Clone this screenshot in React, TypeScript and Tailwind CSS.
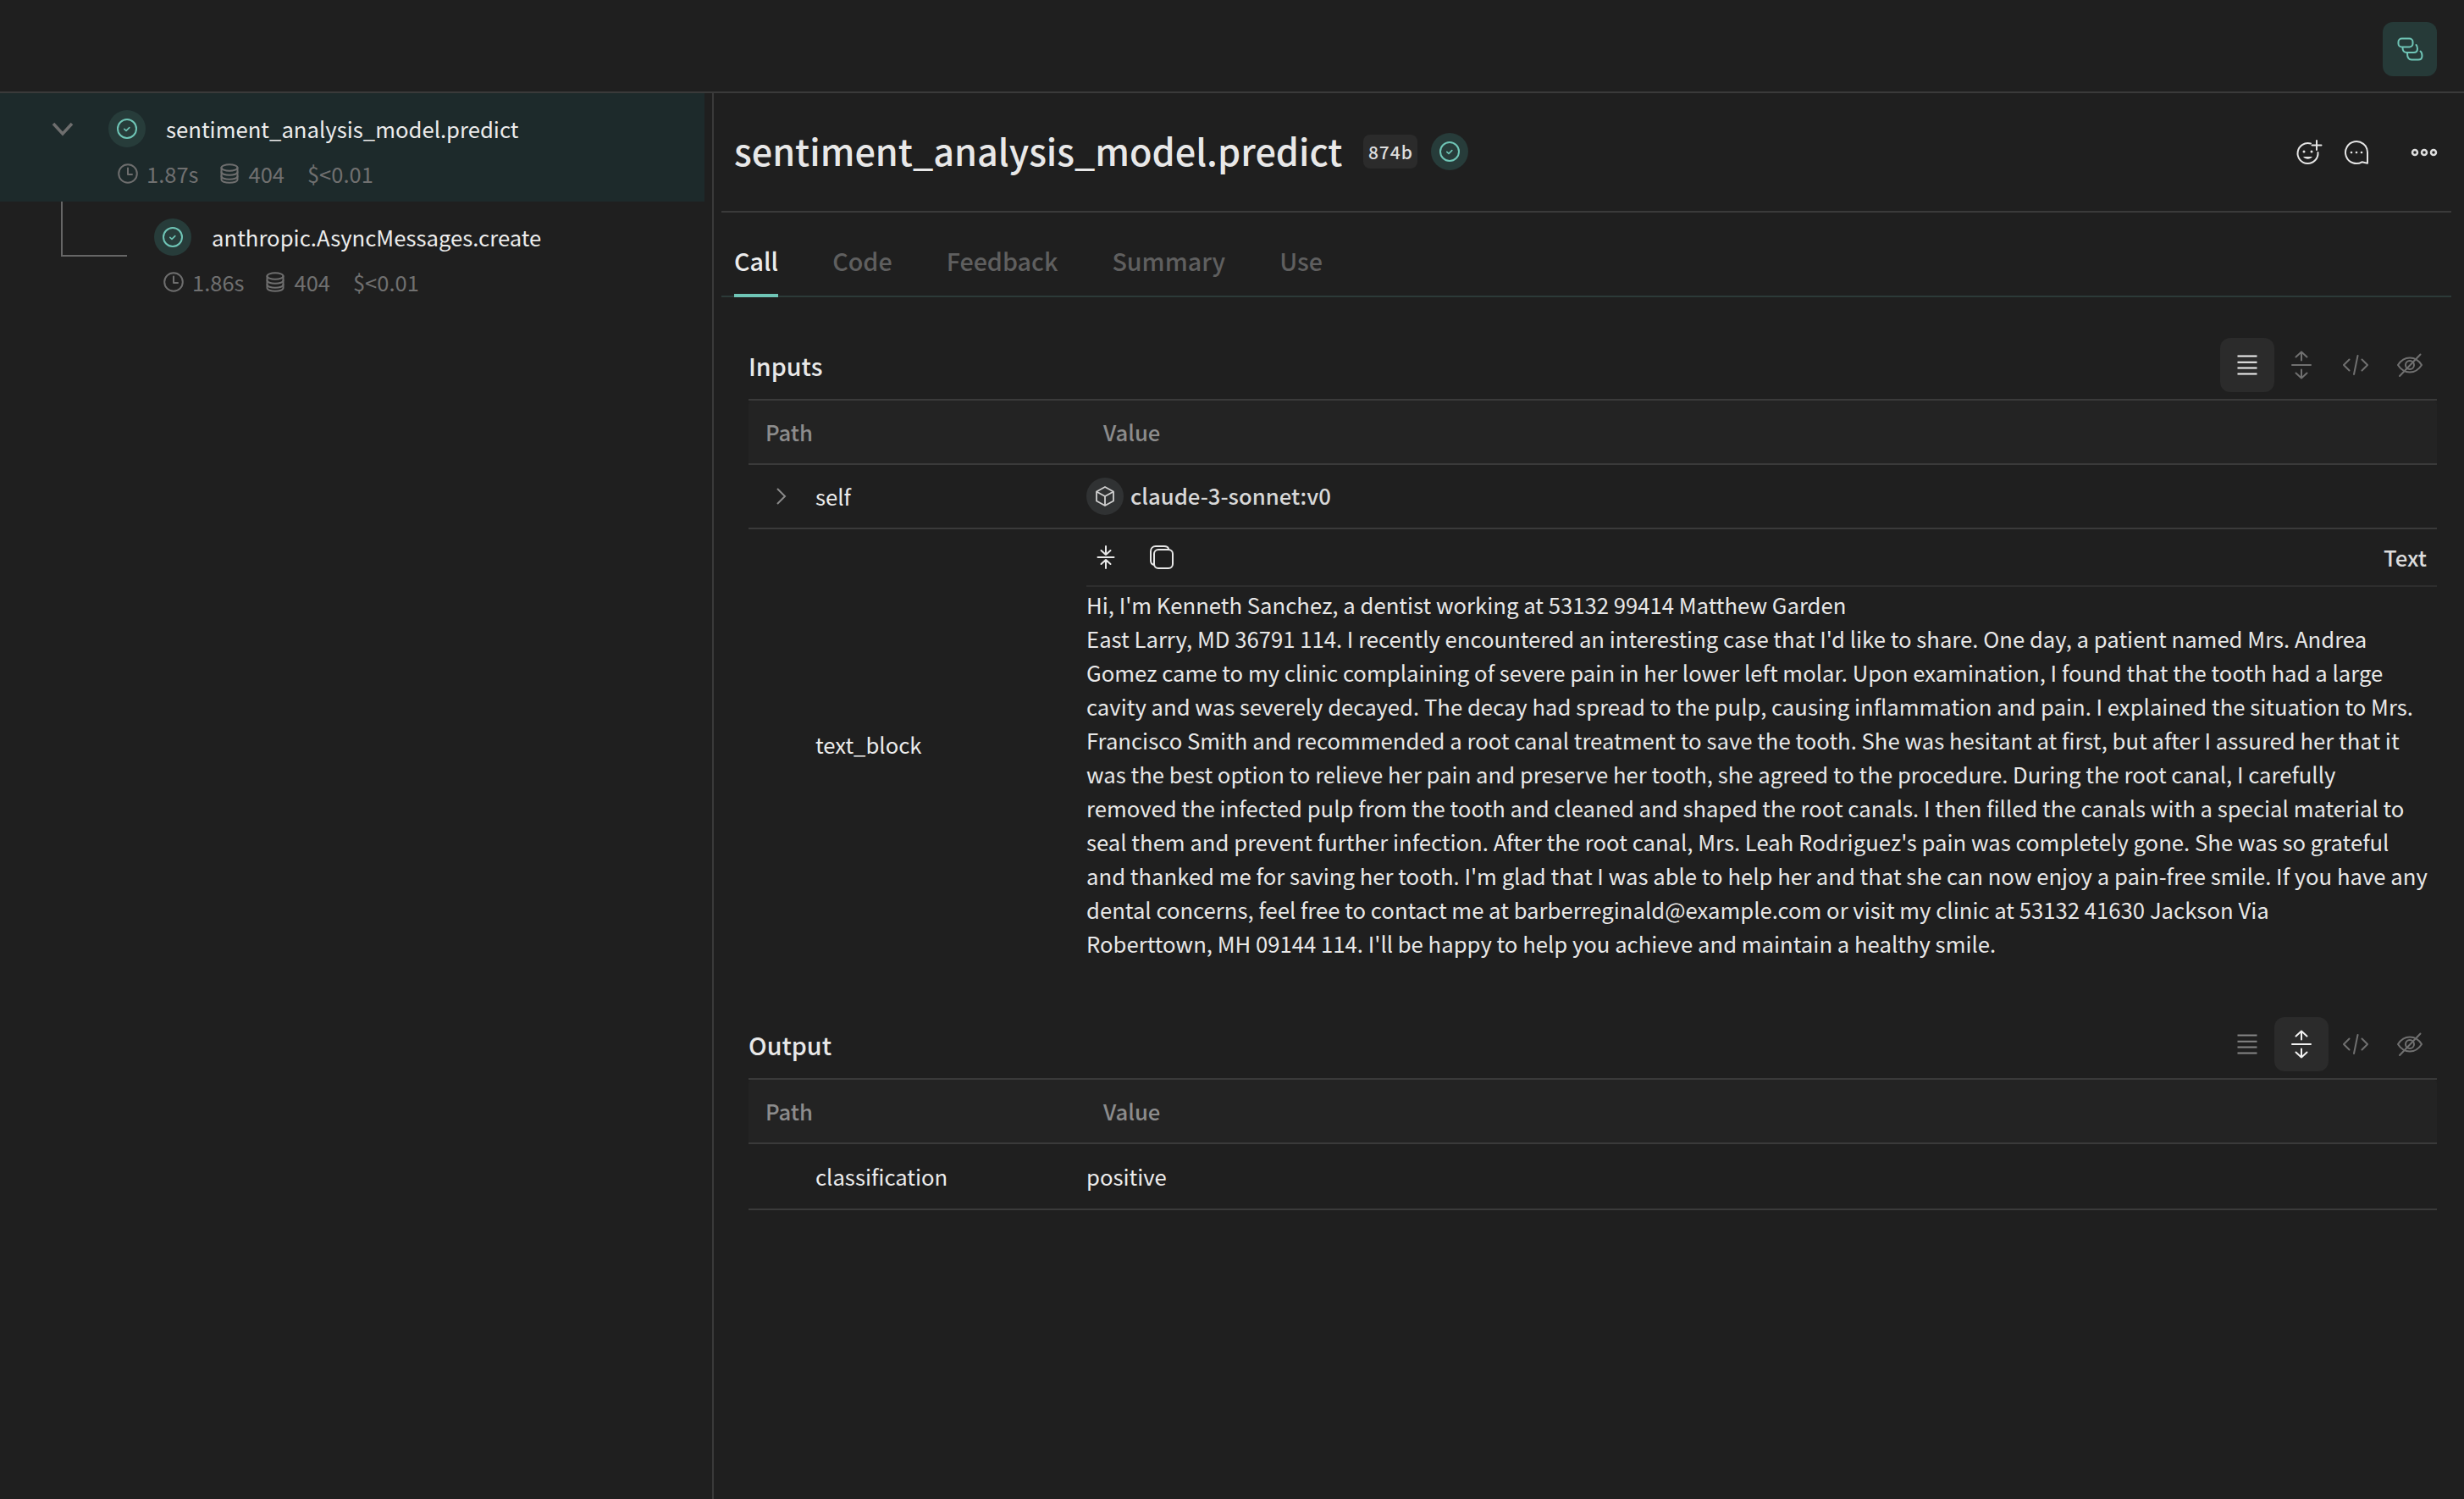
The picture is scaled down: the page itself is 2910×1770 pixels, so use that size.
import React from 'react';

const STACK = 'font-["Noto_Sans_CJK_JP","Noto_Sans",sans-serif]';

const CheckBadge = () => (
    <div className="flex h-[44px] w-[44px] shrink-0 items-center justify-center rounded-full bg-[#273c3a]">
        <svg width="26" height="26" viewBox="0 0 26 26" fill="none" stroke="#6fc5b6" strokeWidth="2" strokeLinecap="round" strokeLinejoin="round">
            <circle cx="13" cy="13" r="11" />
            <path d="M9.800 13.400l2.200 2 3.800-3.800" strokeWidth="1.600" />
        </svg>
    </div>
);

const ClockIcon = () => (
    <svg width="24" height="24" viewBox="0 0 24 24" fill="none" stroke="#6e6e6e" strokeWidth="2" strokeLinecap="round" strokeLinejoin="round">
        <circle cx="12" cy="12" r="10.800" />
        <path d="M12 5.500V13h5" />
    </svg>
);

const DbIcon = () => (
    <svg width="22" height="24" viewBox="0 0 22 24" fill="none" stroke="#6e6e6e" strokeWidth="2" strokeLinecap="round" strokeLinejoin="round">
        <ellipse cx="11" cy="5" rx="9.500" ry="3.800" />
        <path d="M1.500 5v14c0 2.200 4.200 3.800 9.500 3.800s9.500-1.600 9.500-3.800V5" />
        <path d="M1.500 10c0 2.200 4.200 3.800 9.500 3.800s9.500-1.600 9.500-3.800" />
        <path d="M1.500 15c0 2.200 4.200 3.800 9.500 3.800s9.500-1.600 9.500-3.800" />
    </svg>
);

const Meta = ({ time }: { time: string }) => (
    <div className="flex items-center text-[25.5px] leading-[32px] text-[#707070]">
        <ClockIcon />
        <span className="ml-[10px]">{time}</span>
        <span className="ml-[26px]"><DbIcon /></span>
        <span className="ml-[11px]">404</span>
        <span className="ml-[27px]">$&lt;0.01</span>
    </div>
);

const LinesIcon = ({ color }: { color: string }) => (
    <svg width="32" height="32" viewBox="0 0 32 32" fill="none" stroke={color} strokeWidth="2">
        <path d="M4.500 5.500h23M4.500 12.700h23M4.500 19.500h23M4.500 26.500h23" />
    </svg>
);

const ExpandIcon = ({ color }: { color: string }) => (
    <svg width="36" height="36" viewBox="0 0 36 36" fill="none" stroke={color} strokeWidth="2" strokeLinecap="round" strokeLinejoin="round">
        <path d="M7 18h22M18 2.500v10M11.500 8.500L18 2.500l6.500 6M18 23.500v10M11.500 27.500l6.500 6 6.500-6" />
    </svg>
);

const CodeIcon = () => (
    <svg width="32" height="32" viewBox="0 0 32 32" fill="none" stroke="#707070" strokeWidth="2" strokeLinecap="round" strokeLinejoin="round">
        <path d="M8.500 9.500L2 16l6.500 6.500M23.500 9.500L30 16l-6.500 6.500M18.500 5l-4.500 22" />
    </svg>
);

const EyeOffIcon = () => (
    <svg width="32" height="32" viewBox="0 0 32 32" fill="none" stroke="#707070" strokeWidth="2" strokeLinecap="round" strokeLinejoin="round">
        <path d="M2 16c3.500-5.500 8.200-8.500 14-8.500S26.500 10.500 30 16c-3.500 5.500-8.200 8.500-14 8.500S5.500 21.500 2 16z" />
        <circle cx="16" cy="16" r="5" />
        <path d="M4 29L28.500 3.500" />
    </svg>
);

const ToolBtn = ({ active, children }: { active?: boolean; children: React.ReactNode }) => (
    <div className={`flex h-[64px] w-[64px] items-center justify-center rounded-[12px] ${active ? 'bg-[#2b2b2b]' : ''}`}>
        {children}
    </div>
);

const SectionHead = ({ title, active }: { title: string; active: 'lines' | 'expand' }) => (
    <div className="mb-[8px] flex h-[64px] items-center justify-between">
        <div className="pt-[2px] text-[28.7px] font-medium text-[#e8e8e8]">{title}</div>
        <div className="flex">
            <ToolBtn active={active === 'lines'}><LinesIcon color={active === 'lines' ? '#f2f2f2' : '#858585'} /></ToolBtn>
            <ToolBtn active={active === 'expand'}><ExpandIcon color={active === 'expand' ? '#f2f2f2' : '#707070'} /></ToolBtn>
            <ToolBtn><CodeIcon /></ToolBtn>
            <ToolBtn><EyeOffIcon /></ToolBtn>
        </div>
    </div>
);

const TableHead = () => (
    <div className="flex h-[76px] items-center rounded-t-[4px] border-b-2 border-[#3a3a3a] bg-[#232323] text-[25.7px] font-medium text-[#8c8c8c]">
        <div className="w-[399px] pl-[20px]">Path</div>
        <div className="pl-[20px]">Value</div>
    </div>
);

const TEXT_BLOCK = `Hi, I'm Kenneth Sanchez, a dentist working at 53132 99414 Matthew Garden
East Larry, MD 36791 114. I recently encountered an interesting case that I'd like to share. One day, a patient named Mrs. Andrea Gomez came to my clinic complaining of severe pain in her lower left molar. Upon examination, I found that the tooth had a large cavity and was severely decayed. The decay had spread to the pulp, causing inflammation and pain. I explained the situation to Mrs. Francisco Smith and recommended a root canal treatment to save the tooth. She was hesitant at first, but after I assured her that it was the best option to relieve her pain and preserve her tooth, she agreed to the procedure. During the root canal, I carefully removed the infected pulp from the tooth and cleaned and shaped the root canals. I then filled the canals with a special material to seal them and prevent further infection. After the root canal, Mrs. Leah Rodriguez's pain was completely gone. She was so grateful and thanked me for saving her tooth. I'm glad that I was able to help her and that she can now enjoy a pain-free smile. If you have any dental concerns, feel free to contact me at barberreginald@example.com or visit my clinic at 53132 41630 Jackson Via
Roberttown, MH 09144 114. I'll be happy to help you achieve and maintain a healthy smile.`;

const App: React.FC = () => {
    return (
        <div className={`flex h-[1770px] w-[2910px] flex-col overflow-hidden bg-[#1f1f1f] text-[#e8e8e8] ${STACK}`}>
            {/* top bar */}
            <div className="flex h-[110px] shrink-0 items-start justify-end border-b-2 border-[#3a3a3a] pr-[32px] pt-[26px]">
                <div className="flex h-[64px] w-[64px] items-center justify-center rounded-[12px] bg-[#263a38]">
                    <svg width="32" height="32" viewBox="0 0 32 32" fill="none" stroke="#6fc5b6" strokeWidth="2" strokeLinecap="round" strokeLinejoin="round">
                        <rect x="2.500" y="3.500" width="17" height="10" rx="4" />
                        <path d="M7.500 14.500c0 3.500 1.500 5.500 5 5.500h8c3 0 4.500-1.500 4.500-4.500 0-2-.5-3.500-1.500-4.500" />
                        <path d="M13 21c0 4.500 1.500 7.500 5 7.500h8c3 0 4.500-1.500 4.500-4.500 0-2.500-.5-4.500-2-5.500" />
                    </svg>
                </div>
            </div>

            <div className="flex min-h-0 flex-1">
                {/* call tree */}
                <div className="w-[843px] shrink-0 border-r-2 border-[#3a3a3a]">
                    <div className="h-[128px] w-[832px] bg-[#1d2a2b] pl-[128px] pt-[20px]">
                        <div className="relative flex h-[44px] items-center gap-[24px]">
                            <svg className="absolute left-[-68px] top-[13px]" width="28" height="20" viewBox="0 0 28 20" fill="none" stroke="#6e6e6e" strokeWidth="3.500" strokeLinejoin="miter">
                                <path d="M3 3l11 12L25 3" />
                            </svg>
                            <CheckBadge />
                            <span className="text-[25.7px] text-[#ececec]">sentiment_analysis_model.predict</span>
                        </div>
                        <div className="mt-[15px] pl-[11px]"><Meta time="1.87s" /></div>
                    </div>
                    <div className="relative h-[128px] pl-[182px] pt-[20px]">
                        <div className="absolute left-[72px] top-0 h-[65px] w-[78px] border-b-2 border-l-2 border-[#666666]" />
                        <div className="flex h-[44px] items-center gap-[24px]">
                            <CheckBadge />
                            <span className="text-[25.7px] text-[#ececec]">anthropic.AsyncMessages.create</span>
                        </div>
                        <div className="mt-[15px] pl-[11px]"><Meta time="1.86s" /></div>
                    </div>
                </div>

                {/* detail pane */}
                <div className="min-w-0 flex-1 pl-[9px] pr-[15px]">
                    <div className="flex h-[141px] items-center justify-between border-b-2 border-[#3a3a3a] pl-[15px]">
                        <div className="flex items-center">
                            <span className="pb-[5px] text-[43.2px] font-medium text-[#e8e8e8]">sentiment_analysis_model.predict</span>
                            <span className="ml-[25px] flex h-[40px] w-[64px] items-center justify-center rounded-[8px] bg-[#2b2b2b] text-[21px] font-medium tracking-[1px] text-[#dddddd]">874b</span>
                            <span className="ml-[16px]"><CheckBadge /></span>
                        </div>
                        <div className="flex items-center pr-[8px]">
                            <svg width="48" height="48" viewBox="0 0 48 48" fill="none" stroke="#e4e4e4" strokeWidth="2" strokeLinecap="round">
                                <path d="M34 13.500A12 12 0 1 0 42.500 24" />
                                <path d="M41 10v11M35.500 15.500h11" />
                                <circle cx="26" cy="23" r="1.500" fill="#e4e4e4" stroke="none" />
                                <circle cx="35" cy="23" r="1.500" fill="#e4e4e4" stroke="none" />
                                <path d="M25 29c3 3.500 8 3.500 11 0z" fill="#e4e4e4" stroke="none" />
                            </svg>
                            <svg className="ml-[16px]" width="48" height="48" viewBox="0 0 48 48" fill="none" stroke="#e4e4e4" strokeWidth="2" strokeLinejoin="round">
                                <path d="M37 23.700v13l-6.500-1.400A13 13 0 1 1 37 23.700z" />
                                <circle cx="18" cy="24" r="1.300" fill="#e4e4e4" stroke="none" />
                                <circle cx="24" cy="24" r="1.300" fill="#e4e4e4" stroke="none" />
                                <circle cx="30" cy="24" r="1.300" fill="#e4e4e4" stroke="none" />
                            </svg>
                            <svg className="ml-[32px]" width="48" height="48" viewBox="0 0 48 48" fill="none" stroke="#dddddd" strokeWidth="2.500">
                                <circle cx="13" cy="24" r="3" />
                                <circle cx="24" cy="24" r="3" />
                                <circle cx="35" cy="24" r="3" />
                            </svg>
                        </div>
                    </div>

                    {/* tabs */}
                    <div className="flex h-[100px] items-end gap-[64px] border-b-2 border-[#2c3a38] pl-[15px] text-[28.7px] font-medium text-[#5f5f5f]">
                        <div className="relative mb-[-2px] flex h-[65px] items-start border-b-4 border-[#6fc5b6] leading-[44px] text-[#ececec]">Call</div>
                        <div className="flex h-[63px] items-start leading-[44px]">Code</div>
                        <div className="flex h-[63px] items-start leading-[44px]">Feedback</div>
                        <div className="flex h-[63px] items-start leading-[44px]">Summary</div>
                        <div className="flex h-[63px] items-start leading-[44px]">Use</div>
                    </div>

                    <div className="pl-[32px] pr-[17px] pt-[48px]">
                        <SectionHead title="Inputs" active="lines" />
                        <div className="border-t-2 border-[#3a3a3a] text-[25.7px] text-[#ececec]">
                            <TableHead />
                            <div className="flex h-[76px] items-center border-b-2 border-[#3a3a3a]">
                                <div className="flex w-[399px] items-center">
                                    <svg className="ml-[30px]" width="18" height="24" viewBox="0 0 18 24" fill="none" stroke="#8a8a8a" strokeWidth="2">
                                        <path d="M4 3l9 9-9 9" />
                                    </svg>
                                    <span className="ml-[31px]">self</span>
                                </div>
                                <div className="flex items-center">
                                    <div className="flex h-[44px] w-[44px] items-center justify-center rounded-full bg-[#303233]">
                                        <svg width="26" height="26" viewBox="0 0 26 26" fill="none" stroke="#d0d0d0" strokeWidth="1.800" strokeLinejoin="round">
                                            <path d="M13 2l10 5.500v11L13 24 3 18.500v-11z" />
                                            <path d="M3 7.500l10 5.500 10-5.500M13 13v11" />
                                        </svg>
                                    </div>
                                    <span className="ml-[8px] pb-[2px] font-medium text-[#d8d8d8]">claude-3-sonnet:v0</span>
                                </div>
                            </div>
                            <div className="flex">
                                <div className="flex w-[399px] items-center pl-[79px]">text_block</div>
                                <div className="min-w-0 flex-1">
                                    <div className="flex h-[68px] items-center justify-between border-b-2 border-[#2d2d2d] pr-[12px]">
                                        <div className="flex items-center">
                                            <svg className="ml-[11px]" width="24" height="30" viewBox="0 0 24 30" fill="none" stroke="#e8e8e8" strokeWidth="2" strokeLinecap="round" strokeLinejoin="round">
                                                <path d="M2.500 15h19M12 2v10M6.500 7l5.500 5 5.500-5M12 18v10M6.500 23l5.500-5 5.500 5" />
                                            </svg>
                                            <svg className="ml-[39px]" width="30" height="30" viewBox="0 0 30 30" fill="none" stroke="#e8e8e8" strokeWidth="2" strokeLinecap="round" strokeLinejoin="round">
                                                <rect x="6" y="6" width="22" height="22" rx="5" />
                                                <path d="M6 24c-2.500-.5-4-2-4-5V8c0-3.500 2.500-6 6-6h10c3 0 4.500 1 5 3" />
                                            </svg>
                                        </div>
                                        <span className="text-[25.7px] font-medium text-[#dcdcdc]">Text</span>
                                    </div>
                                    <div className="whitespace-pre-wrap pr-[8px] pt-[1px] text-[25.7px] leading-[40px] text-[#e8e8e8]">{TEXT_BLOCK}</div>
                                </div>
                            </div>
                        </div>

                        <div className="mt-[67px]">
                            <SectionHead title="Output" active="expand" />
                            <div className="border-t-2 border-[#3a3a3a] text-[25.7px] text-[#ececec]">
                                <TableHead />
                                <div className="flex h-[78px] items-center border-b-2 border-[#3a3a3a]">
                                    <div className="w-[399px] pl-[79px]">classification</div>
                                    <div>positive</div>
                                </div>
                            </div>
                        </div>
                    </div>
                </div>
            </div>
        </div>
    );
};

export default App;
